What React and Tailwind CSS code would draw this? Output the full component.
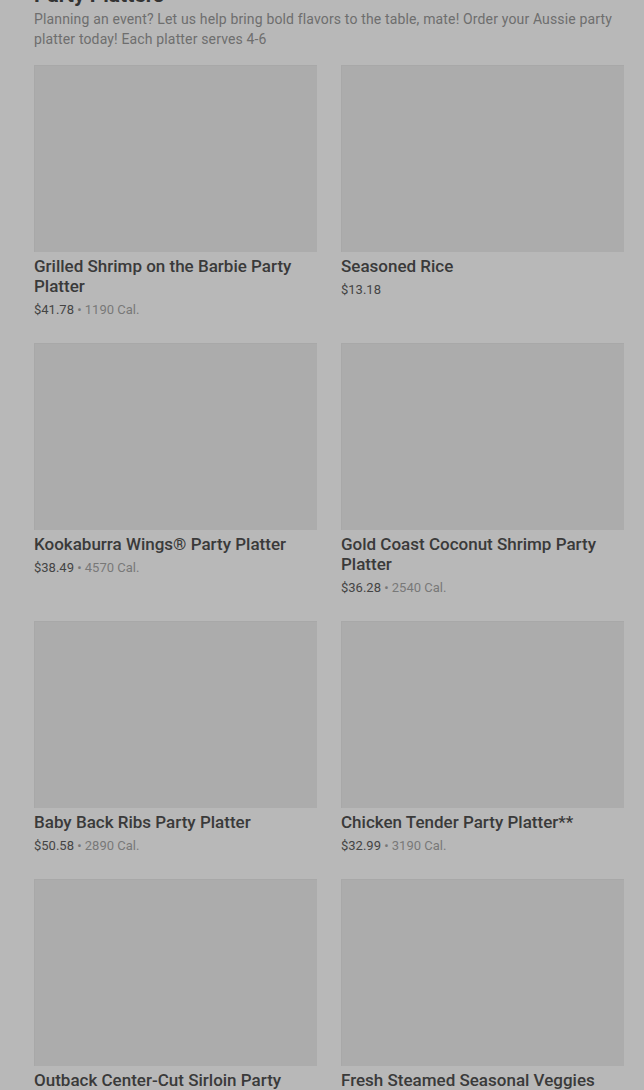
import React from 'react'

const platters = [
  { name: 'Grilled Shrimp on the Barbie Party Platter', price: '$41.78', cal: '1190 Cal.' },
  { name: 'Seasoned Rice', price: '$13.18' },
  { name: 'Kookaburra Wings® Party Platter', price: '$38.49', cal: '4570 Cal.' },
  { name: 'Gold Coast Coconut Shrimp Party Platter', price: '$36.28', cal: '2540 Cal.' },
  { name: 'Baby Back Ribs Party Platter', price: '$50.58', cal: '2890 Cal.' },
  { name: 'Chicken Tender Party Platter**', price: '$32.99', cal: '3190 Cal.' },
  { name: 'Outback Center-Cut Sirloin Party Platter', price: '$64.99', cal: '1620 Cal.' },
  { name: 'Fresh Steamed Seasonal Veggies', price: '$12.49', cal: '240 Cal.' },
]

function Card({ name, price, cal }) {
  return (
    <div className="flex flex-col">
      <div className="h-[187px] w-full bg-[#acacac] border-t border-l border-[#a8a8a8]" />
      <p className="mt-[4px] text-[17px] leading-[20px] font-medium text-[#3a3a3a]">{name}</p>
      <p className="mt-[4px] text-[13px] leading-[20px]">
        <span className="text-[#444444]">{price}</span>
        {cal && <span className="text-[#787878]"> • {cal}</span>}
      </p>
    </div>
  )
}

export default function App() {
  return (
    <div className="h-[1090px] w-[644px] overflow-hidden bg-[#b8b8b8] pl-[34px] pr-[20px]"
      style={{ fontFamily: 'Roboto, "Liberation Sans", sans-serif' }}>
      <h2 className="-mt-[19px] text-[21px] leading-[28px] font-bold text-[#333333]">Party Platters</h2>
      <p className="text-[14px] leading-[20px] tracking-[0.15px] text-[#6e6e6e]">
        Planning an event? Let us help bring bold flavors to the table, mate! Order your Aussie party platter today! Each platter serves 4-6
      </p>
      <div className="mt-[16px] grid grid-cols-2 gap-x-[24px] gap-y-[23px]">
        {platters.map(p => <Card key={p.name} {...p} />)}
      </div>
    </div>
  )
}
